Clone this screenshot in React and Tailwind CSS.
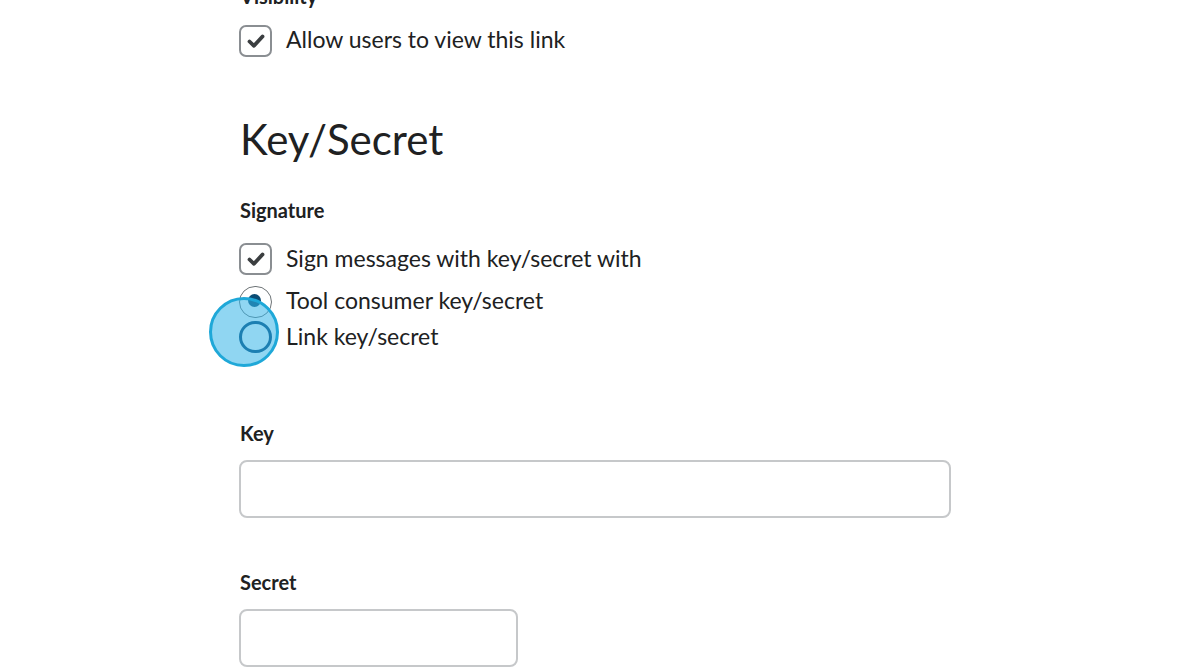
import React from "react";

function Check() {
  return (
    <div className="flex h-[32px] w-[33px] shrink-0 items-center justify-center rounded-[7px] border-2 border-[#8a8e92] bg-white">
      <svg width="24" height="24" viewBox="0 0 24 24">
        <path d="M5.5 12.5 L10 16.8 L18.5 7.5" fill="none" stroke="#3b3e40" strokeWidth="3.8" strokeLinecap="round" strokeLinejoin="round" />
      </svg>
    </div>
  );
}

export default function App() {
  return (
    <div className="min-h-[670px] w-full overflow-hidden bg-white text-[#202122]" style={{ fontFamily: "Lato, 'Open Sans', sans-serif" }}>
      <div className="ml-[239px] flex flex-col">
        <div className="mt-[-15px] ml-[1px] h-[22px] text-[20px] font-bold leading-[22px]">Visibility</div>

        <div className="mt-[18px] flex h-[32px] items-start gap-[14px]">
          <Check />
          <span className="text-[23px] leading-[28px]">Allow users to view this link</span>
        </div>

        <h1 className="mt-[59px] ml-[1px] h-[46px] text-[42px] font-normal leading-[46px]">Key/Secret</h1>

        <div className="mt-[37px] ml-[1px] h-[22px] text-[20px] font-bold leading-[22px]">Signature</div>

        <div className="mt-[22px] flex h-[32px] items-start gap-[14px]">
          <Check />
          <span className="text-[23px] leading-[30px]">Sign messages with key/secret with</span>
        </div>

        <div className="relative mt-[11px] flex flex-col gap-[3px]">
          <div className="flex h-[32px] items-start gap-[14px]">
            <div className="flex h-[32px] w-[33px] shrink-0 items-center justify-center rounded-full border border-[#6e7477] bg-white">
              <div className="mb-[3px] mr-[2px] h-[13px] w-[13px] rounded-full bg-[#0b4c74]" />
            </div>
            <span className="text-[23px] leading-[28px]">Tool consumer key/secret</span>
          </div>
          <div className="flex h-[32px] items-start gap-[14px]">
            <div className="relative z-10 h-[32px] w-[33px] shrink-0 rounded-full border-[3px] border-[#1c7fb2]" />
            <span className="text-[23px] leading-[30px]">Link key/secret</span>
          </div>
          <div className="pointer-events-none absolute left-[-30px] top-[11px] h-[70px] w-[70px] rounded-full border-[3px] border-[#1fa8d8] bg-[#35b5e8]/55" />
        </div>

        <div className="mt-[69px] ml-[1px] h-[22px] text-[20px] font-bold leading-[22px]">Key</div>
        <div className="mt-[16px] h-[58px] w-[712px] rounded-[8px] border-2 border-[#c6c8ca] bg-white" />

        <div className="mt-[53px] ml-[1px] h-[22px] text-[20px] font-bold leading-[22px]">Secret</div>
        <div className="mt-[16px] h-[58px] w-[279px] rounded-[8px] border-2 border-[#c6c8ca] bg-white" />
      </div>
    </div>
  );
}
